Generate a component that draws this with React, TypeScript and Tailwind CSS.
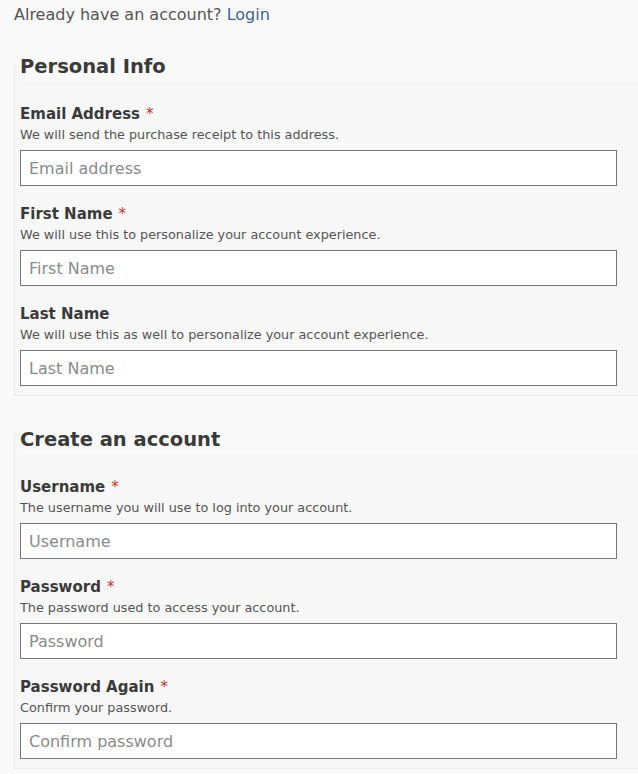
import React from 'react';

interface FieldProps {
  label: string;
  help: string;
  placeholder: string;
  type?: string;
  required?: boolean;
}

const Field: React.FC<FieldProps> = ({ label, help, placeholder, type = 'text', required }) => (
  <div className="flex flex-col">
    <label className="pt-[1px] text-[15px] leading-[22px] font-bold text-[#3a3a3a]">
      {label}
      {required && <span className="ml-[6px] font-normal text-[#c0392b]">*</span>}
    </label>
    <p className="text-[12.8px] leading-[20px] text-[#555]">{help}</p>
    <input
      type={type}
      placeholder={placeholder}
      className="mt-[5px] h-[36px] w-full border border-[#767676] bg-white px-[8px] text-[16px] text-[#333] placeholder:text-[#8a8a8a] outline-none"
    />
  </div>
);

const Section: React.FC<{ title: string; pushed?: boolean; children: React.ReactNode }> = ({
  title,
  pushed,
  children,
}) => (
  <fieldset className="ml-[14px] border border-r-0 border-[#ececec] bg-[#f7f7f7] pl-[5px] pr-[21px] pb-[9px]">
    <legend
      className={
        pushed
          ? 'w-[calc(100%+21px)] bg-[#f9f9f9] pt-[12px] text-[19.5px] leading-[28px] font-bold text-[#3a3a3a]'
          : 'w-[calc(100%+21px)] bg-[#f9f9f9] pt-[1px] text-[19.5px] leading-[28px] font-bold text-[#3a3a3a]'
      }
    >
      {title}
    </legend>
    <div className="flex flex-col gap-[16px] pt-[21px]">{children}</div>
  </fieldset>
);

export default function App() {
  return (
    <div className="min-h-screen bg-[#f9f9f9] font-['DejaVu_Sans',Verdana,sans-serif] text-[#333]">
      <div className="mb-[22px] px-[14px] text-[16px] leading-[30px] text-[#555]">
        Already have an account? <a href="#" className="text-[#3f6589]">Login</a>
      </div>

      <Section title="Personal Info">
        <Field
          label="Email Address"
          required
          help="We will send the purchase receipt to this address."
          placeholder="Email address"
          type="email"
        />
        <Field
          label="First Name"
          required
          help="We will use this to personalize your account experience."
          placeholder="First Name"
        />
        <Field
          label="Last Name"
          help="We will use this as well to personalize your account experience."
          placeholder="Last Name"
        />
      </Section>

      <div className="h-[18px]" />

      <Section title="Create an account" pushed>
        <Field
          label="Username"
          required
          help="The username you will use to log into your account."
          placeholder="Username"
        />
        <Field
          label="Password"
          required
          help="The password used to access your account."
          placeholder="Password"
          type="password"
        />
        <Field
          label="Password Again"
          required
          help="Confirm your password."
          placeholder="Confirm password"
          type="password"
        />
      </Section>
    </div>
  );
}
